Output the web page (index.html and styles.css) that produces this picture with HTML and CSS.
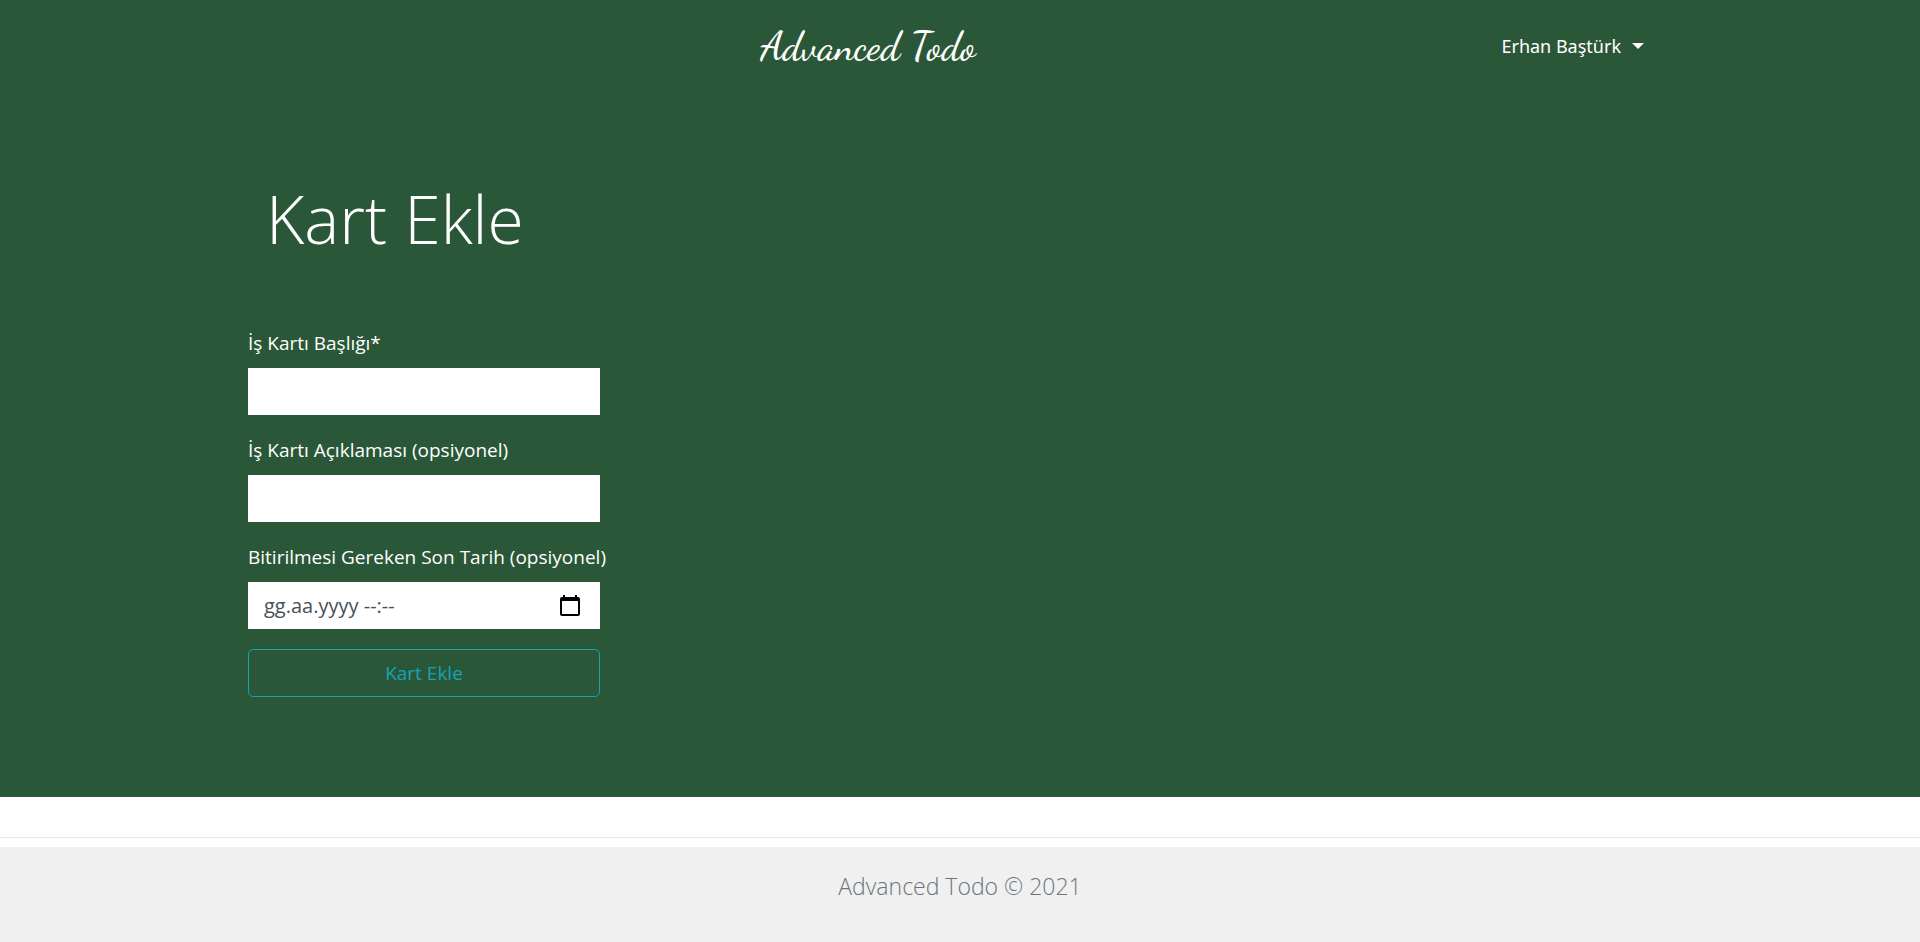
FILE: index.html
```html
<!DOCTYPE html>
<html lang="tr">
<head>
<meta charset="utf-8">
<meta name="viewport" content="width=device-width, initial-scale=1">
<title>Advanced Todo</title>
<link rel="stylesheet" href="styles.css">
</head>
<body>
<div class="page">
  <header class="navbar">
    <a class="brand" href="#">Advanced Todo</a>
    <button class="user-menu" type="button" aria-haspopup="true">Erhan Baştürk<span class="caret"></span></button>
  </header>
  <main class="content">
    <h1 class="title">Kart Ekle</h1>
    <form class="card-form">
      <label class="label" for="card-title">İş Kartı Başlığı*</label>
      <input class="field" id="card-title" type="text">
      <label class="label" for="card-description">İş Kartı Açıklaması (opsiyonel)</label>
      <input class="field" id="card-description" type="text">
      <label class="label" for="due-date">Bitirilmesi Gereken Son Tarih (opsiyonel)</label>
      <div class="date-field">
        <input class="date-input" id="due-date" type="text" placeholder="gg.aa.yyyy --:--">
        <button class="date-picker" type="button" aria-label="Tarih seç">
          <svg class="calendar-icon" viewBox="0 0 20 22" aria-hidden="true"><path d="M3 0h2v2h10V0h2v2h1a2 2 0 0 1 2 2v15a2 2 0 0 1-2 2H2a2 2 0 0 1-2-2V4a2 2 0 0 1 2-2h1zM2 6v13h16V6z" fill="#000" fill-rule="evenodd"/></svg>
        </button>
      </div>
      <button class="submit" type="submit">Kart Ekle</button>
    </form>
  </main>
</div>
<hr class="divider">
<footer class="footer">Advanced Todo © 2021</footer>
</body>
</html>
```
FILE: styles.css
```css
* {
  box-sizing: border-box;
}

body {
  margin: 0;
  min-height: 100vh;
  display: flex;
  flex-direction: column;
  background: #fff;
  color: #fff;
  font-family: "Segoe UI", "Open Sans", "Noto Sans", sans-serif;
  font-size: 19px;
  line-height: 30px;
}

input,
button {
  font: inherit;
}

.page {
  padding-bottom: 100px;
  background: #2a5738;
}

.navbar {
  display: grid;
  grid-template-columns: 1fr auto 1fr;
  align-items: center;
  padding: 16px 276px;
}

.brand {
  grid-column: 2;
  margin-right: 184px;
  color: #fff;
  font-family: "Dancing Script", cursive;
  font-size: 40px;
  font-weight: 500;
  line-height: 60px;
  text-decoration: none;
  white-space: nowrap;
}

.user-menu {
  display: flex;
  align-items: center;
  justify-self: end;
  gap: 11px;
  padding: 0;
  border: 0;
  background: none;
  color: #fff;
  font-family: "Segoe UI", "Noto Sans", sans-serif;
  font-size: 18px;
  white-space: nowrap;
}

.caret {
  border: 6px solid transparent;
  border-top-color: #fff;
  border-bottom: 0;
}

.content {
  display: flex;
  flex-direction: column;
  align-items: flex-start;
  padding: 78px 248px 0;
}

.title {
  margin: 0 0 62px;
  padding: 0 18px;
  font-size: 66px;
  font-weight: 300;
  line-height: 96px;
}

.card-form {
  display: flex;
  flex-direction: column;
  width: 352px;
}

.label {
  margin-bottom: 10px;
  white-space: nowrap;
}

.field,
.date-field {
  width: 100%;
  height: 47px;
  margin: 0 0 20px;
  border: 0;
  border-radius: 0;
  background: #fff;
}

.field {
  padding: 8px 16px;
}

.date-field {
  display: flex;
  align-items: center;
  padding: 0 20px 0 16px;
}

.date-input {
  flex: 1;
  min-width: 0;
  padding: 0;
  border: 0;
  background: none;
  color: #495057;
  font-size: 20px;
}

.date-input::placeholder {
  color: #495057;
}

.date-picker {
  display: flex;
  padding: 0;
  border: 0;
  background: none;
}

.calendar-icon {
  width: 20px;
  height: 22px;
}

.submit {
  padding: 8px 16px;
  border: 1px solid #17a2b8;
  border-radius: 5px;
  background: transparent;
  color: #17a2b8;
}

.divider {
  width: 100%;
  margin: 40px 0 9px;
  border: 0;
  border-top: 1px solid #e5e5e5;
}

.footer {
  flex: 1;
  padding: 20px;
  background: #f0f0f0;
  color: #6c757d;
  font-size: 23px;
  font-weight: 300;
  line-height: 38px;
  text-align: center;
}
```
